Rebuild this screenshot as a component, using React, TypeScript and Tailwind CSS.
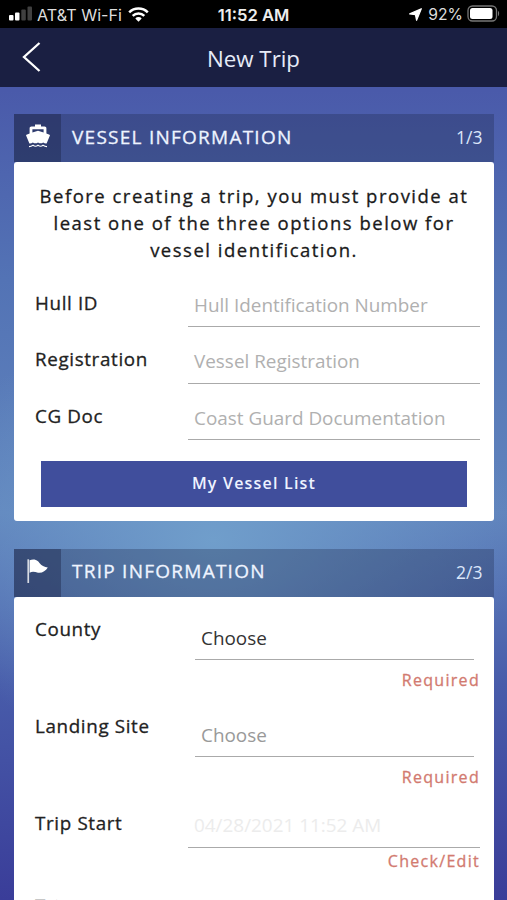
import type { ReactNode } from "react";

const VESSEL_FIELDS = [
  { label: "Hull ID", placeholder: "Hull Identification Number" },
  { label: "Registration", placeholder: "Vessel Registration" },
  { label: "CG Doc", placeholder: "Coast Guard Documentation" },
];

function BoatIcon() {
  return (
    <svg viewBox="0 0 24 24" className="h-6 w-6" fill="white">
      <path
        fillRule="evenodd"
        d="M9 .6h6v2h3.6c1 0 1.8.8 1.8 1.8v5.2l3.1 1.1c.4.2.5.5.4.9l-3.3 7.9c-1.3.2-2.4-.2-3.5-1-1.3 1-3 1.3-5.1 0-1.9 1.3-3.7 1-5.1 0-1.1.8-2.2 1.2-3.5 1L.1 11.6c-.1-.4 0-.7.4-.9l3.1-1.1V4.4c0-1 .8-1.8 1.8-1.8H9zM6.4 5.2v3.3L12 6.7l5.6 1.8V5.2z"
      />
      <path
        d="M3 22.600c1.700 0 2.800-.5 4-1.300 1.700 1.300 3.400 1.300 5 0 1.700 1.300 3.400 1.300 5 0 1.200.8 2.300 1.300 4 1.300"
        fill="none"
        stroke="white"
        strokeWidth="1.1"
      />
    </svg>
  );
}

function FlagIcon() {
  return (
    <svg viewBox="0 0 24 24" className="h-6 w-6" fill="white">
      <path d="M1.4.3h1.7V24H1.4z" opacity=".8" />
      <path d="M3.6 1.2C6.6.1 9.6.2 12 2.2c2.2 1.9 2.8 5.2 9.8 6.3-2.3 3.5-5.8 5.9-9.8 5.2-3-.6-5.4-1.7-8.4.1z" />
    </svg>
  );
}

function SectionHeader({ icon, title, step }: { icon: ReactNode; title: string; step: string }) {
  return (
    <div className="flex h-12 items-center bg-[#1a2444]/30">
      <div className="flex h-12 w-[47px] items-center justify-center bg-[#1a2040]/40 pb-1">{icon}</div>
      <h2 className="ml-[11px] flex-1 pb-0.5 text-[19px] tracking-[1.25px] text-[#eef4ff] [-webkit-text-stroke:0.3px]">{title}</h2>
      <span className="pr-[11.5px] pb-px text-[17.5px] text-[#dbe6fa]">{step}</span>
    </div>
  );
}

function Label({ children }: { children: ReactNode }) {
  return (
    <label className="w-[153px] text-[18.8px] leading-6 tracking-[0.65px] text-[#222] [-webkit-text-stroke:0.3px]">
      {children}
    </label>
  );
}

function Hint({ children }: { children: ReactNode }) {
  return (
    <p className="text-right text-base leading-6 tracking-[1.3px] text-[#d27a70] [-webkit-text-stroke:0.3px]">{children}</p>
  );
}

function SelectRow({ label, muted }: { label: string; muted?: boolean }) {
  return (
    <div className="flex h-[97px] pt-5">
      <Label>{label}</Label>
      <div className="flex-1">
        <div className="mr-1.5 mb-2 ml-[7px] h-[43px] border-b-[1.5px] border-[#aaa] pt-[9px] pl-1.5">
          <span className={`block text-[18.9px] leading-6 ${muted ? "text-[#999]" : "text-[#333]"}`}>Choose</span>
        </div>
        <Hint>Required</Hint>
      </div>
    </div>
  );
}

export default function App() {
  return (
    <div className="h-[900px] w-[507px] overflow-hidden bg-[linear-gradient(180deg,#4a5aaa_10%,#5373b5_31%,#6084bd_57%,#485caa_76%,#3a3d99_100%)] font-['Open_Sans',sans-serif]">
      <div className="h-full bg-[radial-gradient(ellipse_60%_25%_at_42%_60%,#709ecb_0%,#709ecb00_100%)]">
        {/* status bar */}
        <div className="flex h-[27.5px] items-center bg-black px-[9px] font-[Inter,sans-serif] text-[16.2px] text-[#ddd]">
          <div className="flex flex-1 items-center">
            <svg width="24" height="15" viewBox="0 0 24 15" fill="white" className="mr-1">
              <rect y="9" width="4.5" height="5.5" rx="1" />
              <rect x="6" y="6.5" width="4.5" height="8" rx="1" />
              <rect x="12.3" y="3.5" width="4.5" height="11" rx="1" opacity=".25" />
              <rect x="18.5" y=".5" width="4.5" height="14" rx="1" opacity=".25" />
            </svg>
            <span className="pt-[3px]">AT&amp;T Wi-Fi</span>
            <svg width="21" height="15" viewBox="0 0 21 15" className="mt-0.5 ml-1.5" fill="none" stroke="white" strokeWidth="2.5">
              <path d="M1.2 5.3a13.2 13.2 0 0 1 18.6 0M4.7 8.9a8.2 8.2 0 0 1 11.6 0" />
              <path d="M7.3 11.4a4.6 4.6 0 0 1 6.4 0L10.5 14.7z" fill="white" stroke="none" />
            </svg>
          </div>
          <span className="pt-[3px] text-[16.6px] font-semibold text-[#eee]">11:52 AM</span>
          <div className="flex flex-1 items-center justify-end">
            <svg width="13" height="13" viewBox="0 0 13 13" fill="white" className="mt-0.5 mr-1.5">
              <path d="M12.3.7 7.6 12.3 6.4 6.6.7 5.9z" stroke="white" strokeWidth="1.2" strokeLinejoin="round" />
            </svg>
            <span className="pt-[3px] text-[15.7px]">92%</span>
            <svg width="33" height="17" viewBox="0 0 33 17" className="-mr-0.5 ml-1">
              <rect x="1" y="1" width="28.5" height="15" rx="4.5" fill="none" stroke="#777" strokeWidth="1.3" />
              <rect x="3" y="3" width="22.5" height="11" rx="2.5" fill="white" />
              <path d="M31 6c1.5.5 1.5 4.5 0 5z" fill="#777" />
            </svg>
          </div>
        </div>

        {/* title bar */}
        <header className="grid h-[59.5px] grid-cols-[80px_1fr_80px] items-center bg-[#1a1f42]">
          <svg width="19" height="30" viewBox="0 0 19 30" className="ml-[22px]" fill="none" stroke="white" strokeWidth="2.3">
            <path d="M17.5 1 2 15l15.5 14" />
          </svg>
          <h1 className="pt-0.5 text-center text-[22.3px] text-[#e6ebf8]">New Trip</h1>
        </header>

        <main className="pt-[27px] pr-[13px] pl-[14px]">
          <section>
            <SectionHeader icon={<BoatIcon />} title="VESSEL INFORMATION" step="1/3" />
            <div className="h-[359px] rounded-[3px] bg-white pt-5 pr-[14px] pl-[21px]">
              <p className="pr-[7px] text-center text-[18.5px] leading-[27px] tracking-[1.5px] text-[#1a1a1a] [-webkit-text-stroke:0.3px]">
                Before creating a trip, you must provide at
                <br />
                least one of the three options below for
                <br />
                vessel identification.
              </p>
              <div className="mt-[15.5px]">
                {VESSEL_FIELDS.map((field) => (
                  <div key={field.label} className="flex h-[56.7px] pt-3">
                    <Label>{field.label}</Label>
                    <div className="h-[36.5px] flex-1 border-b-[1.5px] border-[#aaa] pt-0.5 pl-1.5 text-[18.9px] leading-6 text-[#b0b0b0]">
                      {field.placeholder}
                    </div>
                  </div>
                ))}
              </div>
              <button className="mt-3 ml-[6px] h-[46px] w-[426px] bg-[#404e9c] pb-0.5 text-base font-semibold tracking-[1.2px] text-[#eef3ff]">
                My Vessel List
              </button>
            </div>
          </section>

          <section className="mt-[27.5px]">
            <SectionHeader icon={<FlagIcon />} title="TRIP INFORMATION" step="2/3" />
            <div className="rounded-t-[3px] bg-white pr-[14px] pl-[21px]">
              <SelectRow label="County" />
              <SelectRow label="Landing Site" muted />
              <div className="flex h-[83px] pt-5">
                <Label>Trip Start</Label>
                <div className="flex-1">
                  <div className="mb-px h-[37px] border-b-[1.5px] border-[#aaa] pt-0.5 pl-1.5 text-[18.9px] leading-6 text-[#ececec]">
                    04/28/2021 11:52 AM
                  </div>
                  <Hint>Check/Edit</Hint>
                </div>
              </div>
              <div className="flex h-[97px] pt-5">
                <Label>Trip</Label>
              </div>
            </div>
          </section>
        </main>
      </div>
    </div>
  );
}
